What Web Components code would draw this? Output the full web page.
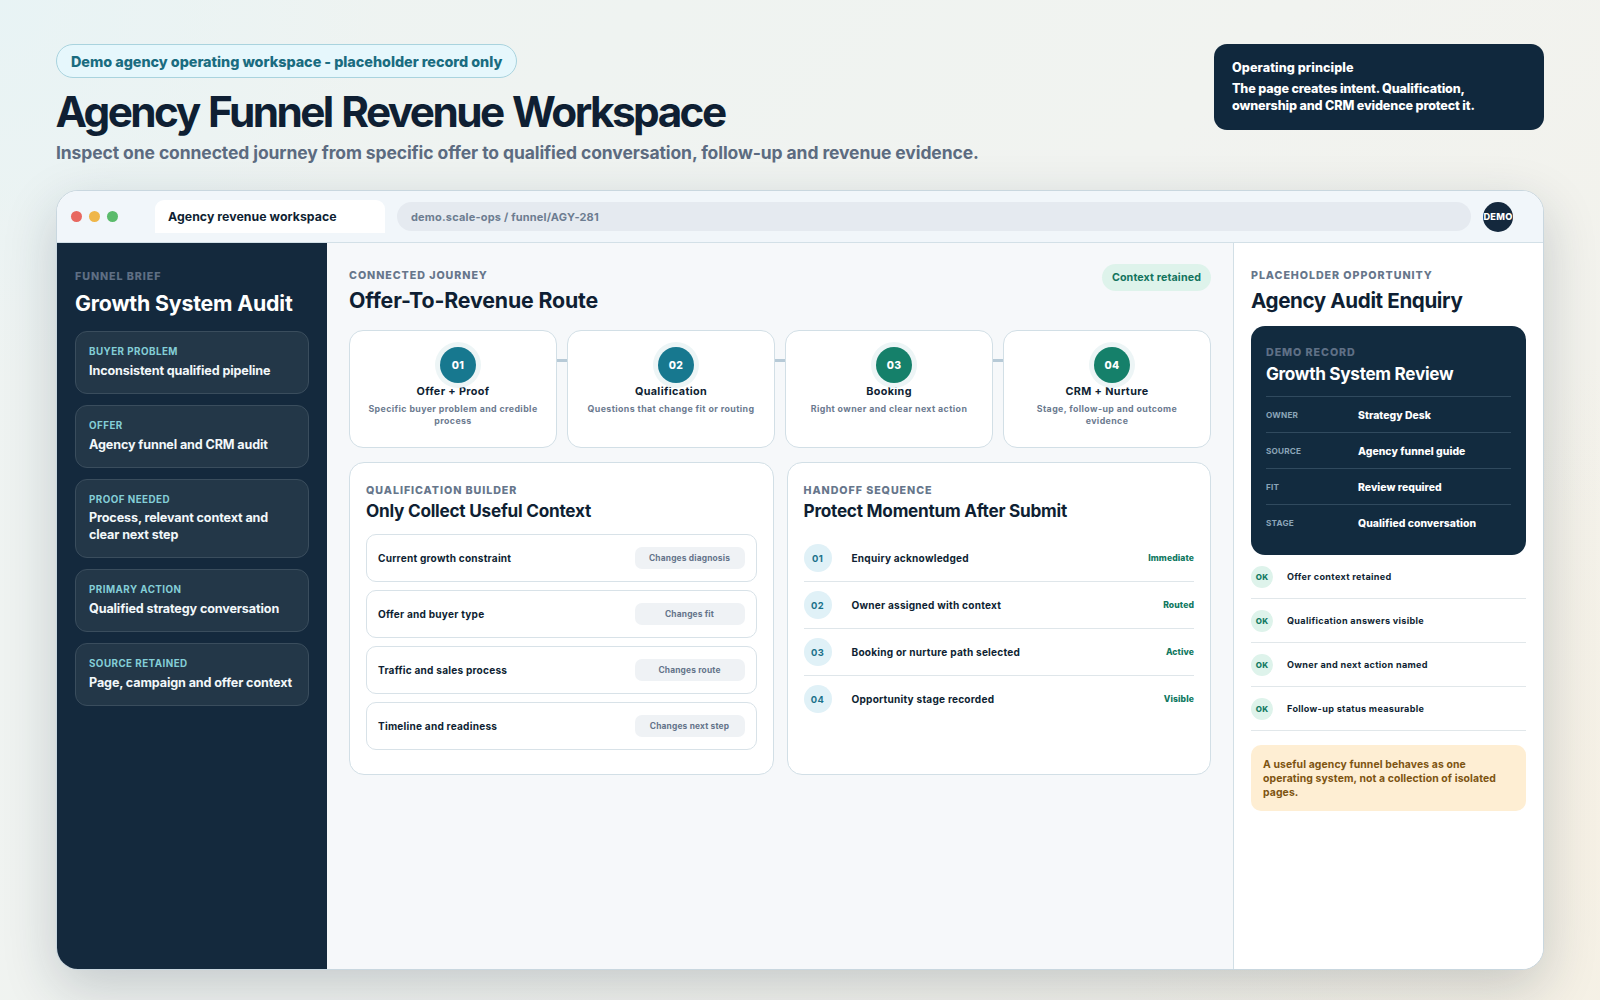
<!DOCTYPE html>
<html lang="en">
<head>
<meta charset="utf-8">
<title>Agency Funnel Revenue Workspace</title>
<style>
    * {
        box-sizing: border-box;
    }
    body {
        margin: 0;
        width: 1600px;
        height: 1000px;
        overflow: hidden;
        font-family: Inter, "Liberation Sans", sans-serif;
        font-weight: 700;
        color: #0f1f33;
        background:
            radial-gradient(circle at 0% 0%, rgb(230 243 246 / 0.7), rgb(230 243 246 / 0) 380px),
            radial-gradient(circle at 100% 85%, rgb(246 240 227 / 0.7), rgb(246 240 227 / 0) 500px),
            linear-gradient(135deg, #edf3f2 0%, #f1f3f0 50%, #f4f1e8 100%);
    }
</style>
</head>
<body>
<agency-page></agency-page>

<script>
class SectionTitle extends HTMLElement {
    constructor() {
        super();
        this.attachShadow({ mode: 'open' });
    }

    connectedCallback() {
        this.shadowRoot.innerHTML = `
            <style>
                :host {
                    display: block;
                    --title-size: 21.3px;
                    --title-line: 26px;
                    --title-gap: 4px;
                    --title-track: -0.14px;
                }
                :host([size="small"]) {
                    --title-size: 17.2px;
                    --title-line: 22px;
                    --title-gap: 2px;
                    --title-track: -0.25px;
                }
                :host([size="panel"]) {
                    --title-size: 20.6px;
                    --title-gap: 5px;
                    --title-track: -0.38px;
                }
                .eyebrow {
                    padding-top: 1px;
                    font-size: 10.7px;
                    line-height: 14px;
                    letter-spacing: 0.93px;
                    font-weight: 800;
                    text-transform: uppercase;
                    color: var(--eyebrow-color, #66768b);
                }
                h2 {
                    margin: var(--title-gap) 0 0;
                    font-size: var(--title-size);
                    line-height: var(--title-line);
                    letter-spacing: var(--title-track);
                    font-weight: 700;
                    white-space: nowrap;
                }
            </style>
            <div class="eyebrow">${this.getAttribute('eyebrow')}</div>
            <h2><slot></slot></h2>
        `;
    }
}
customElements.define('section-title', SectionTitle);

class PageHeader extends HTMLElement {
    constructor() {
        super();
        this.attachShadow({ mode: 'open' });
    }

    connectedCallback() {
        this.shadowRoot.innerHTML = `
            <style>
                * {
                    box-sizing: border-box;
                    margin: 0;
                }
                :host {
                    display: flex;
                    justify-content: space-between;
                    align-items: flex-start;
                    height: 146px;
                }
                .badge {
                    display: inline-flex;
                    align-items: center;
                    width: 461px;
                    height: 34px;
                    padding: 1px 14px 0;
                    border: 1px solid #a9d3de;
                    border-radius: 17px;
                    background: #e6f7fc;
                    color: #1a6c80;
                    font-size: 14.4px;
                    font-weight: 800;
                    letter-spacing: -0.04px;
                    white-space: nowrap;
                }
                .intro {
                    display: flex;
                    flex-direction: column;
                    align-items: flex-start;
                }
                h1 {
                    margin-top: 11px;
                    font-size: 42.3px;
                    line-height: 45px;
                    letter-spacing: -2.56px;
                    word-spacing: 2px;
                    font-weight: 740;
                    text-indent: -0.5px;
                    white-space: nowrap;
                }
                .sub {
                    margin-top: 6px;
                    font-size: 17.5px;
                    line-height: 26px;
                    font-weight: 650;
                    letter-spacing: -0.1px;
                    color: #5c6b80;
                    white-space: nowrap;
                }
                aside {
                    width: 330px;
                    height: 86px;
                    padding: 15px 18px;
                    border-radius: 13px;
                    background: #10283d;
                    color: #fff;
                    font-size: 12.6px;
                    line-height: 17px;
                    font-weight: 800;
                }
                aside h3 {
                    font-size: 12.6px;
                    font-weight: 800;
                    letter-spacing: 0.08px;
                    margin-bottom: 4px;
                }
                aside p {
                    letter-spacing: -0.15px;
                }
            </style>
            <div class="intro">
                <div class="badge">Demo agency operating workspace - placeholder record only</div>
                <h1>Agency Funnel Revenue Workspace</h1>
                <p class="sub">Inspect one connected journey from specific offer to qualified conversation, follow-up and revenue evidence.</p>
            </div>
            <aside>
                <h3>Operating principle</h3>
                <p>The page creates intent. Qualification,<br>ownership and CRM evidence protect it.</p>
            </aside>
        `;
    }
}
customElements.define('page-header', PageHeader);

class BrowserWindow extends HTMLElement {
    constructor() {
        super();
        this.attachShadow({ mode: 'open' });
    }

    connectedCallback() {
        this.shadowRoot.innerHTML = `
            <style>
                * {
                    box-sizing: border-box;
                }
                :host {
                    display: flex;
                    flex-direction: column;
                    box-sizing: border-box;
                    height: 780px;
                    border: 1px solid #c9d7df;
                    border-radius: 22px;
                    overflow: hidden;
                    background: #fff;
                    box-shadow: 0 18px 54px rgb(18 40 58 / 0.2);
                }
                .chrome {
                    display: grid;
                    grid-template-columns: 72px 230px 1fr 46px;
                    column-gap: 12px;
                    align-items: center;
                    height: 52px;
                    padding: 0 14px;
                    border-bottom: 1px solid #d3e0e7;
                    background: #f1f6fa;
                }
                .dots {
                    display: flex;
                    gap: 7px;
                }
                .dots i {
                    width: 11px;
                    height: 11px;
                    border-radius: 50%;
                }
                .tab {
                    height: 33px;
                    padding-left: 13px;
                    border-radius: 9px 9px 0 0;
                    background: #fff;
                    font-size: 12.3px;
                    line-height: 33px;
                    letter-spacing: 0.05px;
                }
                .url {
                    height: 29px;
                    padding-left: 14px;
                    border-radius: 15px;
                    background: #e5eaf0;
                    color: #6d7d91;
                    font-size: 11px;
                    line-height: 30px;
                    letter-spacing: 0.18px;
                }
                .avatar {
                    display: grid;
                    place-items: center;
                    width: 30px;
                    height: 30px;
                    border-radius: 50%;
                    background: #14283d;
                    color: #fff;
                    font-size: 9.2px;
                    font-weight: 800;
                    letter-spacing: 0.25px;
                }
                .body {
                    flex: 1;
                    display: grid;
                    grid-template-columns: 270px 1fr 310px;
                }
            </style>
            <div class="chrome">
                <div class="dots">
                    <i style="background:#e86860"></i>
                    <i style="background:#efb649"></i>
                    <i style="background:#5bbb6b"></i>
                </div>
                <div class="tab">${this.getAttribute('tab')}</div>
                <div class="url">${this.getAttribute('url')}</div>
                <div class="avatar">DEMO</div>
            </div>
            <div class="body"><slot></slot></div>
        `;
    }
}
customElements.define('browser-window', BrowserWindow);

class BriefCard extends HTMLElement {
    constructor() {
        super();
        this.attachShadow({ mode: 'open' });
    }

    connectedCallback() {
        this.shadowRoot.innerHTML = `
            <style>
                :host {
                    display: block;
                    padding: 14px 13px 13.4px;
                    border: 1px solid #3a4d5d;
                    border-radius: 12px;
                    background: #233748;
                }
                .label {
                    font-size: 9.8px;
                    line-height: 12px;
                    letter-spacing: 0.46px;
                    text-transform: uppercase;
                    color: #83ced7;
                }
                .value {
                    margin-top: 4.7px;
                    font-size: 12.6px;
                    line-height: 16.8px;
                    letter-spacing: -0.12px;
                    color: #f2f7fa;
                }
            </style>
            <div class="label">${this.getAttribute('label')}</div>
            <div class="value"><slot></slot></div>
        `;
    }
}
customElements.define('brief-card', BriefCard);

class FunnelBrief extends HTMLElement {
    constructor() {
        super();
        this.attachShadow({ mode: 'open' });
    }

    connectedCallback() {
        this.shadowRoot.innerHTML = `
            <style>
                :host {
                    display: block;
                    padding: 26px 18px 0;
                    background: #14293d;
                    color: #fff;
                    --eyebrow-color: #5f6f84;
                }
                section-title {
                    --title-gap: 6px;
                    --title-track: -0.17px;
                }
                .cards {
                    display: flex;
                    flex-direction: column;
                    gap: 11px;
                    margin-top: 15px;
                }
            </style>
            <section-title eyebrow="Funnel brief">Growth System Audit</section-title>
            <div class="cards">
                <brief-card label="Buyer problem">Inconsistent qualified pipeline</brief-card>
                <brief-card label="Offer">Agency funnel and CRM audit</brief-card>
                <brief-card label="Proof needed">Process, relevant context and clear next step</brief-card>
                <brief-card label="Primary action">Qualified strategy conversation</brief-card>
                <brief-card label="Source retained">Page, campaign and offer context</brief-card>
            </div>
        `;
    }
}
customElements.define('funnel-brief', FunnelBrief);

class RouteStep extends HTMLElement {
    constructor() {
        super();
        this.attachShadow({ mode: 'open' });
    }

    connectedCallback() {
        this.shadowRoot.innerHTML = `
            <style>
                :host {
                    display: block;
                    position: relative;
                    box-sizing: border-box;
                    height: 118px;
                    padding: 16px 14px 0;
                    border: 1px solid #d2dfe6;
                    border-radius: 14px;
                    background: #fff;
                    text-align: center;
                }
                /* line to the next step */
                :host(:not(:last-child))::after {
                    content: "";
                    position: absolute;
                    left: calc(100% + 1px);
                    top: 28px;
                    width: 10px;
                    height: 3px;
                    background: #b7cad7;
                }
                .num {
                    position: relative;
                    display: grid;
                    place-items: center;
                    width: 36px;
                    height: 36px;
                    margin-left: calc(50% - 13px);
                    border-radius: 50%;
                    background: #17788f;
                    box-shadow: 0 0 0 5px #edf5f6;
                    color: #fff;
                    font-size: 10.4px;
                    font-weight: 800;
                    letter-spacing: 0.3px;
                }
                :host([tone="green"]) .num {
                    background: #15806a;
                }
                .name {
                    padding-top: 1px;
                    font-size: 10.8px;
                    line-height: 15px;
                    letter-spacing: 0.36px;
                }
                .text {
                    margin-top: 4px;
                    font-size: 8.8px;
                    line-height: 12px;
                    letter-spacing: 0.4px;
                    font-weight: 700;
                    color: #6b7a8f;
                }
            </style>
            <div class="num">${this.getAttribute('num')}</div>
            <div class="name">${this.getAttribute('name')}</div>
            <div class="text"><slot></slot></div>
        `;
    }
}
customElements.define('route-step', RouteStep);

class WorkPanel extends HTMLElement {
    constructor() {
        super();
        this.attachShadow({ mode: 'open' });
    }

    connectedCallback() {
        this.shadowRoot.innerHTML = `
            <style>
                :host {
                    display: block;
                    box-sizing: border-box;
                    height: 313px;
                    padding: 20px 16px 0;
                    border: 1px solid #d2dfe6;
                    border-radius: 15px;
                    background: #fff;
                }
            </style>
            <section-title size="small" eyebrow="${this.getAttribute('eyebrow')}">${this.getAttribute('heading')}</section-title>
            <slot></slot>
        `;
    }
}
customElements.define('work-panel', WorkPanel);

class QualifyRow extends HTMLElement {
    constructor() {
        super();
        this.attachShadow({ mode: 'open' });
    }

    connectedCallback() {
        this.shadowRoot.innerHTML = `
            <style>
                :host {
                    display: flex;
                    justify-content: space-between;
                    align-items: center;
                    box-sizing: border-box;
                    height: 48px;
                    padding: 0 11px;
                    border: 1px solid #d8e2e8;
                    border-radius: 10px;
                    font-size: 10.1px;
                    letter-spacing: 0.22px;
                }
                .effect {
                    width: 110px;
                    height: 22px;
                    border-radius: 7px;
                    background: #eff2f5;
                    color: #64748a;
                    font-size: 8.4px;
                    line-height: 22px;
                    letter-spacing: 0.17px;
                    text-align: center;
                }
            </style>
            <span><slot></slot></span>
            <div class="effect">${this.getAttribute('effect')}</div>
        `;
    }
}
customElements.define('qualify-row', QualifyRow);

class HandoffRow extends HTMLElement {
    constructor() {
        super();
        this.attachShadow({ mode: 'open' });
    }

    connectedCallback() {
        this.shadowRoot.innerHTML = `
            <style>
                :host {
                    display: grid;
                    grid-template-columns: 28px 1fr auto;
                    column-gap: 20px;
                    align-items: center;
                    box-sizing: border-box;
                    height: 47px;
                    border-bottom: 1px solid #dfe6ea;
                    font-size: 10.1px;
                    letter-spacing: 0.22px;
                }
                :host(:last-child) {
                    border-bottom-color: transparent;
                }
                .num {
                    display: grid;
                    place-items: center;
                    height: 28px;
                    border-radius: 50%;
                    background: #e0f1f7;
                    color: #1b718a;
                    font-size: 9.4px;
                    letter-spacing: 0.4px;
                }
                .state {
                    color: #10785f;
                    font-size: 8.6px;
                    font-weight: 800;
                    letter-spacing: 0.1px;
                }
            </style>
            <div class="num">${this.getAttribute('num')}</div>
            <span><slot></slot></span>
            <span class="state">${this.getAttribute('state')}</span>
        `;
    }
}
customElements.define('handoff-row', HandoffRow);

class JourneyMain extends HTMLElement {
    constructor() {
        super();
        this.attachShadow({ mode: 'open' });
    }

    connectedCallback() {
        this.shadowRoot.innerHTML = `
            <style>
                :host {
                    display: block;
                    padding: 21px 22px 0;
                    background: #f6f8fa;
                }
                header {
                    display: flex;
                    justify-content: space-between;
                    align-items: flex-start;
                    height: 66px;
                }
                header section-title {
                    margin-top: 4px;
                }
                .pill {
                    height: 27px;
                    padding: 0 10px;
                    border-radius: 14px;
                    background: #def3eb;
                    color: #13745e;
                    font-size: 10.7px;
                    line-height: 28px;
                    letter-spacing: 0.12px;
                }
                .steps {
                    display: grid;
                    grid-template-columns: repeat(4, 1fr);
                    gap: 10px;
                }
                .panels {
                    display: grid;
                    grid-template-columns: 1fr 1fr;
                    gap: 13px;
                    margin-top: 14px;
                }
                .rows {
                    display: flex;
                    flex-direction: column;
                    gap: 8px;
                    margin-top: 12px;
                }
                .sequence {
                    margin-top: 13px;
                }
            </style>
            <header>
                <section-title eyebrow="Connected journey">Offer-To-Revenue Route</section-title>
                <div class="pill">Context retained</div>
            </header>
            <div class="steps">
                <route-step num="01" name="Offer + Proof">Specific buyer problem and credible process</route-step>
                <route-step num="02" name="Qualification">Questions that change fit or routing</route-step>
                <route-step num="03" name="Booking" tone="green">Right owner and clear next action</route-step>
                <route-step num="04" name="CRM + Nurture" tone="green">Stage, follow-up and outcome evidence</route-step>
            </div>
            <div class="panels">
                <work-panel eyebrow="Qualification builder" heading="Only Collect Useful Context">
                    <div class="rows">
                        <qualify-row effect="Changes diagnosis">Current growth constraint</qualify-row>
                        <qualify-row effect="Changes fit">Offer and buyer type</qualify-row>
                        <qualify-row effect="Changes route">Traffic and sales process</qualify-row>
                        <qualify-row effect="Changes next step">Timeline and readiness</qualify-row>
                    </div>
                </work-panel>
                <work-panel eyebrow="Handoff sequence" heading="Protect Momentum After Submit">
                    <div class="sequence">
                        <handoff-row num="01" state="Immediate">Enquiry acknowledged</handoff-row>
                        <handoff-row num="02" state="Routed">Owner assigned with context</handoff-row>
                        <handoff-row num="03" state="Active">Booking or nurture path selected</handoff-row>
                        <handoff-row num="04" state="Visible">Opportunity stage recorded</handoff-row>
                    </div>
                </work-panel>
            </div>
        `;
    }
}
customElements.define('journey-main', JourneyMain);

class DemoRecord extends HTMLElement {
    constructor() {
        super();
        this.attachShadow({ mode: 'open' });
    }

    connectedCallback() {
        this.shadowRoot.innerHTML = `
            <style>
                :host {
                    display: block;
                    padding: 19px 15px 15px;
                    border-radius: 14px;
                    background: #122b3f;
                    color: #fff;
                    --eyebrow-color: #5f7086;
                }
                section-title {
                    --title-gap: 3px;
                    --title-track: -0.31px;
                }
                dl {
                    margin: 11px 0 0;
                }
                dl div {
                    display: grid;
                    grid-template-columns: 92px 1fr;
                    align-items: center;
                    box-sizing: border-box;
                    height: 36px;
                    padding-top: 1px;
                    border-top: 1px solid #304a5e;
                }
                dt {
                    font-size: 8.2px;
                    font-weight: 650;
                    letter-spacing: 0.2px;
                    text-transform: uppercase;
                    color: #8ba5b8;
                }
                dd {
                    margin: 0;
                    font-size: 10.4px;
                    font-weight: 800;
                    letter-spacing: 0.05px;
                }
            </style>
            <section-title size="small" eyebrow="Demo record">Growth System Review</section-title>
            <dl>
                <div><dt>Owner</dt><dd>Strategy Desk</dd></div>
                <div><dt>Source</dt><dd>Agency funnel guide</dd></div>
                <div><dt>Fit</dt><dd>Review required</dd></div>
                <div><dt>Stage</dt><dd>Qualified conversation</dd></div>
            </dl>
        `;
    }
}
customElements.define('demo-record', DemoRecord);

class CheckRow extends HTMLElement {
    constructor() {
        super();
        this.attachShadow({ mode: 'open' });
    }

    connectedCallback() {
        this.shadowRoot.innerHTML = `
            <style>
                :host {
                    display: flex;
                    align-items: center;
                    gap: 14px;
                    box-sizing: border-box;
                    height: 44px;
                    border-bottom: 1px solid #e1e7ea;
                    font-size: 9.1px;
                    letter-spacing: 0.31px;
                }
                .ok {
                    display: grid;
                    place-items: center;
                    width: 22px;
                    height: 22px;
                    border-radius: 50%;
                    background: #def3eb;
                    color: #127a62;
                    font-size: 8px;
                    font-weight: 800;
                    letter-spacing: 0.1px;
                }
            </style>
            <div class="ok">OK</div>
            <span><slot></slot></span>
        `;
    }
}
customElements.define('check-row', CheckRow);

class OpportunityPanel extends HTMLElement {
    constructor() {
        super();
        this.attachShadow({ mode: 'open' });
    }

    connectedCallback() {
        this.shadowRoot.innerHTML = `
            <style>
                :host {
                    display: block;
                    padding: 25px 17px 0;
                    border-left: 1px solid #d2dfe6;
                    background: #fff;
                }
                demo-record {
                    margin-top: 12px;
                }
                .note {
                    margin-top: 14px;
                    padding: 13px 12px 11px;
                    border-radius: 10px;
                    background: #feeed3;
                    color: #7d5411;
                    font-size: 10.4px;
                    font-weight: 750;
                    line-height: 14px;
                    letter-spacing: 0.12px;
                }
            </style>
            <section-title size="panel" eyebrow="Placeholder opportunity">Agency Audit Enquiry</section-title>
            <demo-record></demo-record>
            <check-row>Offer context retained</check-row>
            <check-row>Qualification answers visible</check-row>
            <check-row>Owner and next action named</check-row>
            <check-row>Follow-up status measurable</check-row>
            <div class="note">A useful agency funnel behaves as one operating system, not a collection of isolated pages.</div>
        `;
    }
}
customElements.define('opportunity-panel', OpportunityPanel);

class AgencyPage extends HTMLElement {
    constructor() {
        super();
        this.attachShadow({ mode: 'open' });
    }

    connectedCallback() {
        this.shadowRoot.innerHTML = `
            <style>
                :host {
                    display: block;
                    padding: 44px 56px 0;
                }
            </style>
            <page-header></page-header>
            <browser-window tab="Agency revenue workspace" url="demo.scale-ops / funnel/AGY-281">
                <funnel-brief></funnel-brief>
                <journey-main></journey-main>
                <opportunity-panel></opportunity-panel>
            </browser-window>
        `;
    }
}
customElements.define('agency-page', AgencyPage);
</script>
</body>
</html>
